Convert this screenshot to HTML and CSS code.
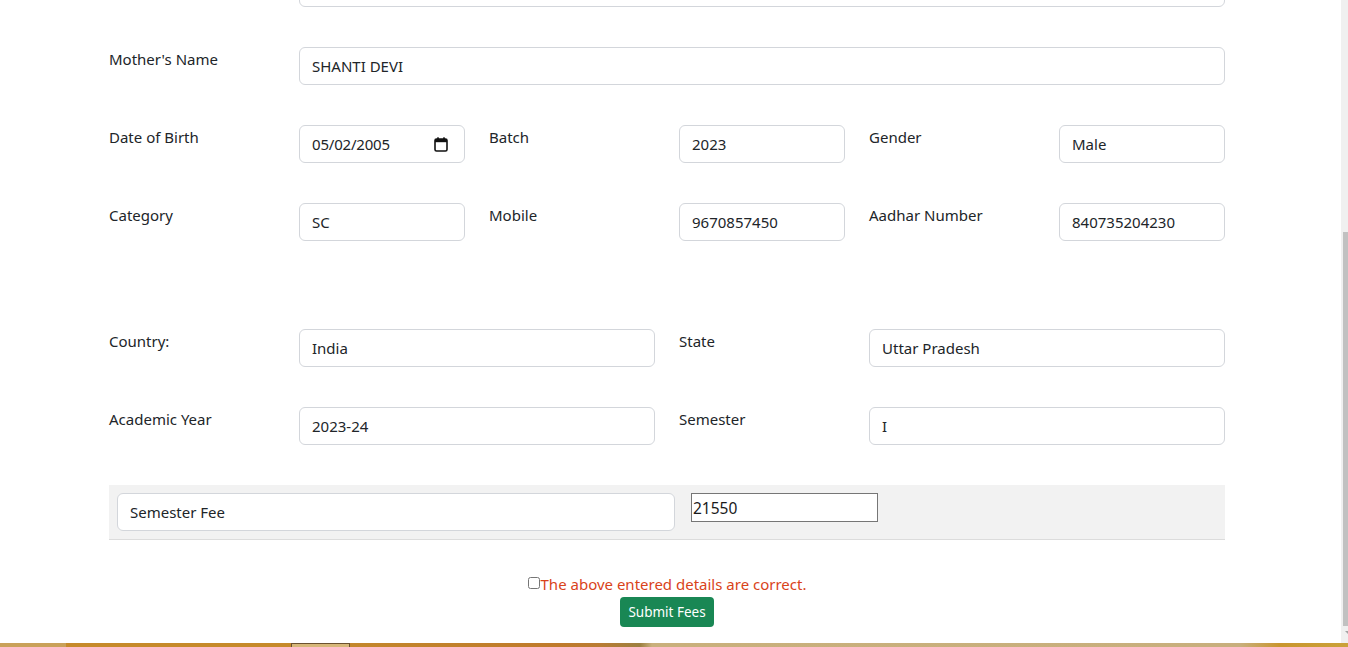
FILE: index.html
```html
<!DOCTYPE html>
<html lang="en">
<head>
<meta charset="utf-8">
<title>Fee Submission</title>
<link rel="stylesheet" href="styles.css">
</head>
<body>
<div class="page">
  <main class="form">
    <div class="row">
      <span class="lbl"></span>
      <input class="ctl span5" type="text" value="" readonly>
    </div>
    <div class="row">
      <label class="lbl">Mother's Name</label>
      <input class="ctl span5" type="text" value="SHANTI DEVI" readonly>
    </div>
    <div class="row">
      <label class="lbl">Date of Birth</label>
      <div class="date">
        <input class="ctl date-in" type="text" value="05/02/2005" readonly>
        <svg class="cal" width="14" height="15" viewBox="0 0 14 15" aria-hidden="true">
          <rect x="1" y="2" width="12" height="12" rx="1.5" fill="none" stroke="#111" stroke-width="1.6"/>
          <rect x="1" y="2" width="12" height="3.2" fill="#111"/>
          <rect x="3.2" y="0.3" width="1.6" height="2.5" fill="#111"/>
          <rect x="9.2" y="0.3" width="1.6" height="2.5" fill="#111"/>
        </svg>
      </div>
      <label class="lbl">Batch</label>
      <input class="ctl" type="text" value="2023" readonly>
      <label class="lbl">Gender</label>
      <input class="ctl" type="text" value="Male" readonly>
    </div>
    <div class="row">
      <label class="lbl">Category</label>
      <input class="ctl" type="text" value="SC" readonly>
      <label class="lbl">Mobile</label>
      <input class="ctl" type="text" value="9670857450" readonly>
      <label class="lbl">Aadhar Number</label>
      <input class="ctl" type="text" value="840735204230" readonly>
    </div>
    <div class="spacer"></div>
    <div class="row">
      <label class="lbl">Country:</label>
      <input class="ctl span2" type="text" value="India" readonly>
      <label class="lbl">State</label>
      <input class="ctl span2" type="text" value="Uttar Pradesh" readonly>
    </div>
    <div class="row">
      <label class="lbl">Academic Year</label>
      <input class="ctl span2" type="text" value="2023-24" readonly>
      <label class="lbl">Semester</label>
      <input class="ctl span2" type="text" value="I" readonly>
    </div>
    <div class="fee">
      <input class="ctl fee-name" type="text" value="Semester Fee" readonly>
      <input class="fee-amt" type="text" value="21550" readonly>
    </div>
    <div class="confirm">
      <label class="check"><input type="checkbox" class="box">The above entered details are correct.</label>
      <button class="btn" type="button">Submit Fees</button>
    </div>
  </main>
  <footer class="foot"><span class="foot-tab"></span></footer>
</div>
<div class="scrollbar"><div class="thumb"></div><div class="arrow"></div></div>
</body>
</html>
```
FILE: styles.css
```css
html, body {
  margin: 0;
  padding: 0;
  height: 647px;
  overflow: hidden;
  background: #fff;
}
body {
  font-family: "Noto Sans", "Open Sans", "Liberation Sans", sans-serif;
  font-size: 15px;
  color: #212529;
}
.page {
  display: flex;
  flex-direction: column;
  height: 647px;
}
.form {
  width: 1116px;
  margin: -31px 0 0 109px;
  flex: 1;
}
.row {
  display: grid;
  grid-template-columns: repeat(6, 166px);
  column-gap: 24px;
  margin-bottom: 40px;
  align-items: start;
}
.lbl {
  line-height: 24px;
  white-space: nowrap;
}
.ctl {
  box-sizing: border-box;
  height: 38px;
  width: 100%;
  border: 1px solid #d3d6db;
  border-radius: 6px;
  padding: 0 12px;
  font-family: inherit;
  font-size: 15px;
  color: #212529;
  background: #fff;
  outline: none;
  margin: 0;
}
.date {
  position: relative;
}
.date-in {
  letter-spacing: -0.2px;
}
.cal {
  position: absolute;
  left: 135px;
  top: 12px;
}
.span5 { grid-column: span 5; }
.span2 { grid-column: span 2; }
.spacer { height: 48px; }
.fee {
  display: flex;
  align-items: flex-start;
  gap: 16px;
  background: #f2f2f2;
  padding: 8px;
  height: 38px;
  border-bottom: 1px solid #dcdcdc;
  box-sizing: content-box;
}
.fee-name {
  width: 558px;
}
.fee-amt {
  box-sizing: border-box;
  width: 187px;
  height: 29px;
  border: 1px solid #767676;
  border-radius: 0;
  padding: 0 1px;
  font-family: inherit;
  font-size: 15.5px;
  color: #1a1a1a;
  background: #fff;
  margin: 0;
  outline: none;
}
.confirm {
  display: flex;
  flex-direction: column;
  align-items: center;
  padding-top: 32px;
}
.check {
  display: flex;
  align-items: center;
  color: #d9431a;
  font-size: 15px;
  line-height: 24px;
}
.box {
  width: 12px;
  height: 12px;
  margin: 0 1px 2px 0;
}
.btn {
  margin-top: 1px;
  height: 30px;
  padding: 0 8px;
  background: #198754;
  color: #fff;
  border: 0;
  border-radius: 4px;
  font-family: inherit;
  font-size: 13.5px;
}
.foot {
  height: 4px;
  flex: none;
  position: relative;
  background: linear-gradient(90deg, #c9a159 0, #c9a159 66px, #c68a2a 66px, #c68a2a 290px, #c3872b 350px, #bf7a2b 560px, #b97c33 600px, #9c8040 640px, #c9b07c 652px, #c8af7d 1240px, #c9962e 1280px, #caa23a 1348px);
}
.foot-tab {
  position: absolute;
  left: 291px;
  top: 0;
  width: 57px;
  height: 3px;
  background: #d6b779;
  border: 1px solid #6b5130;
  border-bottom: 0;
}
.scrollbar {
  position: fixed;
  top: 0;
  right: 0;
  width: 7px;
  height: 643px;
  background: #f0f0f0;
}
.thumb {
  position: absolute;
  left: 2px;
  right: 0;
  top: 232px;
  height: 394px;
  background: #c1c1c1;
}
.arrow {
  position: absolute;
  left: 4px;
  top: 631px;
  width: 0;
  height: 0;
  border-left: 3px solid transparent;
  border-right: 3px solid transparent;
  border-top: 3px solid #a3a3a3;
}
```
